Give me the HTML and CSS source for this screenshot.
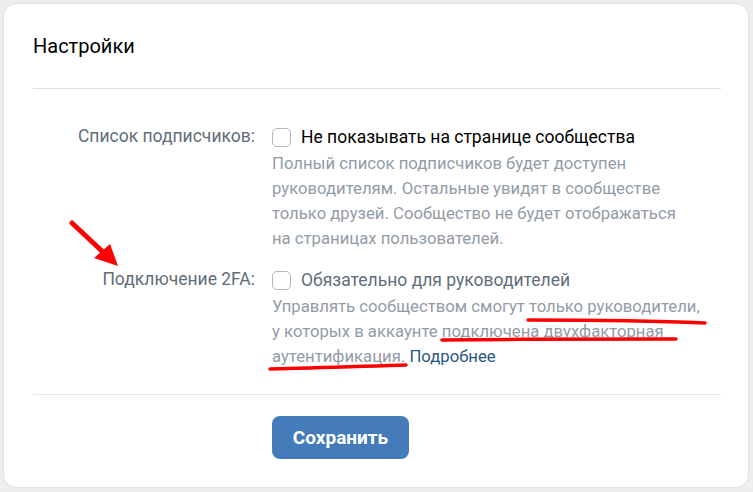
FILE: index.html
```html
<!DOCTYPE html>
<html lang="ru">
<head>
<meta charset="utf-8">
<link rel="stylesheet" href="styles.css">
</head>
<body>
<div class="card">
  <div class="header">Настройки</div>
  <div class="body">
    <div class="row">
      <div class="label">Список подписчиков:</div>
      <div class="field">
        <div class="check"><span class="box"></span><span class="check-text">Не показывать на странице сообщества</span></div>
        <div class="desc">Полный список подписчиков будет доступен<br>руководителям. Остальные увидят в сообществе<br>только друзей. Сообщество не будет отображаться<br>на страницах пользователей.</div>
      </div>
    </div>
    <div class="row">
      <div class="label">Подключение 2FA:</div>
      <div class="field">
        <div class="check"><span class="box"></span><span class="check-text muted">Обязательно для руководителей</span></div>
        <div class="desc">Управлять сообществом смогут только руководители,<br>у которых в аккаунте подключена двухфакторная<br>аутентификация. <a class="link">Подробнее</a></div>
      </div>
    </div>
  </div>
  <div class="footer">
    <button class="btn">Сохранить</button>
  </div>
  <svg class="marks" width="753" height="492" viewBox="0 0 753 492">
    <path d="M72 223 L104 253" stroke="#ff0000" stroke-width="5" stroke-linecap="round" fill="none"/>
    <polygon points="94,258 110,244 118,266" fill="#ff0000"/>
    <path d="M528 320 C590 320 660 321 705 323" stroke="#ff0000" stroke-width="3.5" stroke-linecap="round" fill="none"/>
    <path d="M442 340 C520 339 600 339 676 339" stroke="#ff0000" stroke-width="3.5" stroke-linecap="round" fill="none"/>
    <path d="M270 369 C320 368 370 366 406 365" stroke="#ff0000" stroke-width="3.5" stroke-linecap="round" fill="none"/>
  </svg>
</div>
</body>
</html>
```
FILE: styles.css
```css
html, body {
  margin: 0;
  padding: 0;
}
body {
  background: #edeef0;
  font-family: Roboto, "Liberation Sans", sans-serif;
  width: 753px;
  height: 492px;
  overflow: hidden;
}
.card {
  position: relative;
  margin: 4px 5px 0 4px;
  height: 483px;
  background: #ffffff;
  border-radius: 13px;
  box-shadow: 0 0 0 1px #e3e4e8;
  padding: 0 27px 0 29px;
  box-sizing: border-box;
}
.header {
  font-size: 20px;
  line-height: 24px;
  color: #000000;
  padding: 30px 0;
  border-bottom: 1px solid #dce1e6;
}
.body {
  padding: 35px 0 25px;
  display: flex;
  flex-direction: column;
  gap: 16px;
  border-bottom: 1px solid #e7e8ec;
}
.row {
  display: grid;
  grid-template-columns: 222px 1fr;
  column-gap: 17px;
}
.label {
  text-align: right;
  font-size: 17.5px;
  line-height: 25px;
  color: #626d7a;
  padding-top: 0;
}
.check {
  display: flex;
  align-items: center;
  gap: 10px;
  height: 26px;
  margin-bottom: 1px;
}
.box {
  width: 17px;
  height: 17px;
  border: 1.5px solid #aeb7c2;
  border-radius: 5px;
  flex: none;
}
.check-text {
  font-size: 17.5px;
  color: #000000;
}
.check-text.muted {
  color: #626d7a;
}
.desc {
  font-size: 16.7px;
  line-height: 25px;
  color: #939ca6;
}
.link {
  color: #2a5885;
}
.footer {
  padding: 21px 0 0 239px;
}
.btn {
  width: 137px;
  height: 43px;
  border: none;
  border-radius: 8px;
  background: #447bba;
  color: #ffffff;
  font-family: Roboto, "Liberation Sans", sans-serif;
  font-weight: 700;
  font-size: 19px;
  padding: 0;
}
.marks {
  position: absolute;
  left: -4px;
  top: -4px;
  pointer-events: none;
}
```
